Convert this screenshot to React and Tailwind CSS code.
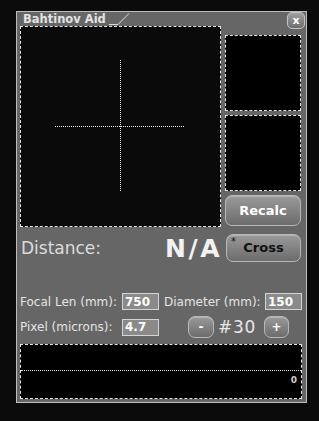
import React from 'react';

const font = { fontFamily: '"DejaVu Sans", Verdana, sans-serif' };

function GrayButton({ children, className = '' }) {
  return (
    <button
      className={`flex items-center justify-center rounded-[7px] border border-[#b8b8b8] bg-gradient-to-b from-[#9a9a9a] to-[#6c6c6c] font-bold shadow-[inset_0_1px_0_rgba(255,255,255,0.25)] ${className}`}
    >
      {children}
    </button>
  );
}

function NumBox({ value }) {
  return (
    <div className="flex h-[17px] w-[37px] items-center border border-[#d4d4d4] bg-[#8a8a8a] pl-[2px] text-[12px] font-bold leading-none text-white">
      {value}
    </div>
  );
}

export default function App() {
  return (
    <div className="h-[421px] w-[319px] bg-[#0b0b0b] pl-[16px] pt-[11px]" style={font}>
      <div className="relative flex h-[392px] w-[291px] flex-col border border-[#bdbdbd] bg-[#666666]">
        {/* Title */}
        <div className="flex h-[14px] items-end pl-[6px]">
          <span className="text-[11.5px] font-bold leading-[13px] text-[#e2e2e2]">Bahtinov Aid</span>
          <svg width="22" height="13" viewBox="0 0 22 13" className="ml-[3px]">
            <polyline points="0,11.5 9,11.5 20,0.5" fill="none" stroke="#d8d8d8" strokeWidth="1" />
          </svg>
        </div>
        <button className="absolute right-[1px] top-0 flex h-[17px] w-[18px] items-center justify-center rounded-[5px] border border-[#c4c4c4] bg-gradient-to-b from-[#a0a0a0] to-[#6e6e6e] text-[11px] font-bold leading-none text-white">
          x
        </button>

        {/* Image + side panels */}
        <div className="flex pl-[3px]">
          <div className="h-[201px] w-[201px] border border-dashed border-[#e6e6e6] bg-[#0a0a0a]">
            <svg width="199" height="199" viewBox="0 0 199 199">
              <line x1="99.5" y1="33" x2="99.5" y2="164" stroke="#f0f0f0" strokeWidth="1" strokeDasharray="1 1" />
              <line x1="34" y1="99.5" x2="163" y2="99.5" stroke="#f0f0f0" strokeWidth="1" strokeDasharray="1 1" />
            </svg>
          </div>
          <div className="ml-[4px] flex w-[76px] flex-col gap-[4px] pt-[9px]">
            <div className="h-[76px] border border-dashed border-[#e6e6e6] bg-black" />
            <div className="h-[76px] border border-dashed border-[#e6e6e6] bg-black" />
            <GrayButton className="h-[31px] text-[13px] text-white">Recalc</GrayButton>
          </div>
        </div>

        {/* Distance */}
        <div className="mt-[7px] flex h-[28px] items-center pl-[4px] pr-[5px]">
          <span className="text-[17px] leading-none text-[#dcdcdc]">Distance:</span>
          <span className="ml-auto text-[25px] font-bold leading-none tracking-[0.1em] text-[#f2f2f2]">N/A</span>
          <GrayButton className="relative ml-[4px] h-[28px] w-[75px] text-[13px] text-[#111]">
            <span className="absolute left-[4px] top-[2px] text-[10px] font-normal leading-none">*</span>
            Cross
          </GrayButton>
        </div>

        {/* Focal / Diameter */}
        <div className="mt-[31px] flex h-[17px] items-center pl-[3px] text-[12px] text-[#e4e4e4]">
          <span className="w-[102px] leading-none">Focal Len (mm):</span>
          <NumBox value="750" />
          <span className="ml-[5px] w-[101px] leading-none">Diameter (mm):</span>
          <NumBox value="150" />
        </div>

        {/* Pixel / mask */}
        <div className="mt-[6px] flex h-[22px] items-center pl-[3px] text-[12px] text-[#e4e4e4]">
          <span className="w-[102px] leading-none">Pixel (microns):</span>
          <NumBox value="4.7" />
          <GrayButton className="ml-[29px] h-[22px] w-[26px] from-[#7c7c7c] to-[#4a4a4a] text-[12px] text-white">-</GrayButton>
          <span className="ml-[4px] text-[17px] leading-none tracking-[0.04em] text-[#e8e8e8]">#30</span>
          <GrayButton className="ml-[8px] h-[22px] w-[25px] from-[#7c7c7c] to-[#4a4a4a] text-[12px] text-white">+</GrayButton>
        </div>

        {/* Graph */}
        <div className="ml-[3px] mt-[6px] flex h-[55px] w-[282px] flex-col border border-dashed border-[#e6e6e6] bg-black">
          <div className="h-[26px] border-b border-dotted border-[#e0e0e0]" />
          <div className="flex flex-1 items-start justify-end pr-[4px] pt-[5px]">
            <span className="text-[9px] font-bold leading-none text-[#d0d0d0]">0</span>
          </div>
        </div>
      </div>
    </div>
  );
}
